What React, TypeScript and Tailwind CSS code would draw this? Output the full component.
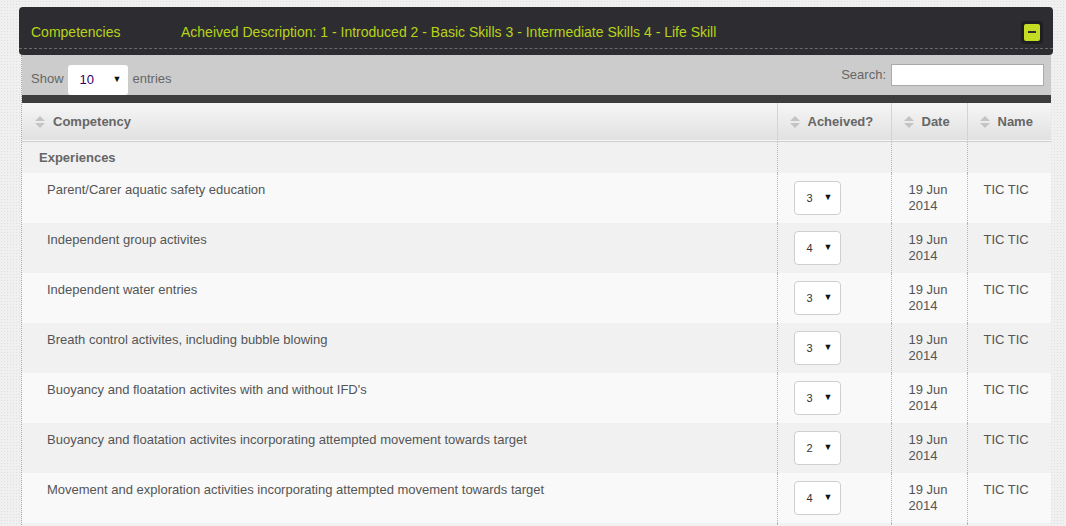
import React from "react";

const rows = [
  { name: "Parent/Carer aquatic safety education", level: "3" },
  { name: "Independent group activites", level: "4" },
  { name: "Independent water entries", level: "3" },
  { name: "Breath control activites, including bubble blowing", level: "3" },
  { name: "Buoyancy and floatation activites with and without IFD's", level: "3" },
  { name: "Buoyancy and floatation activites incorporating attempted movement towards target", level: "2" },
  { name: "Movement and exploration activities incorporating attempted movement towards target", level: "4" },
];

function SortIcon() {
  return (
    <svg width="12" height="14" viewBox="0 0 12 14" className="shrink-0">
      <path d="M6 1 L11 6 L1 6 Z" fill="#c4c4c4" />
      <path d="M1 8 L11 8 L6 13 Z" fill="#c4c4c4" />
    </svg>
  );
}

function MiniSelect({ value }: { value: string }) {
  return (
    <div className="flex h-[34px] w-[47px] items-center justify-between rounded-[4px] border border-[#cfcfcf] bg-white pl-[12px] pr-[7px] text-[11px] text-[#333]">
      <span>{value}</span>
      <span className="text-[9px] text-[#111]">▼</span>
    </div>
  );
}

export default function App() {
  return (
    <div
      className="min-h-[526px] bg-[#f0f0f0] bg-[radial-gradient(#e0e0e0_1px,transparent_1px)] bg-[length:3px_3px] pt-[7px] pl-[19px]"
      style={{ fontFamily: '"Liberation Sans", Arial, sans-serif' }}
    >
      <div className="w-[1034px]">
        {/* panel header */}
        <div className="rounded-[4px] bg-[#2d2d31]">
          <div className="flex h-[42px] items-center border-b border-dashed border-[#6a6a6a] pt-[9px] pl-[12px] pr-[10px] text-[14px] text-[#b8d319]">
            <span className="w-[150px]">Competencies</span>
            <span>Acheived Description: 1 - Introduced 2 - Basic Skills 3 - Intermediate Skills 4 - Life Skill</span>
            <div className="ml-auto flex h-[23px] w-[22px] items-center justify-center rounded-[4px] bg-[#1f1f22]">
              <div className="flex h-[17px] w-[16px] items-center justify-center rounded-[2px] bg-[#c5dc24]">
                <div className="h-[2px] w-[8px] bg-[#2d2d31]" />
              </div>
            </div>
          </div>
          <div className="h-[6px]" />
        </div>

        <div className="mx-[2px] border-l border-dotted border-[#aaa]">
          {/* toolbar */}
          <div className="flex h-[40px] items-start justify-between bg-[#cccccc] pl-[9px] pr-[7px] text-[13px] text-[#666]">
            <div className="mt-[10px] flex items-start">
              <span className="mt-[4px]">Show</span>
              <div className="ml-[4px] flex h-[30px] w-[60px] items-center justify-between rounded-[3px] bg-white pl-[12px] pr-[6px] text-[13px] text-[#330066]">
                <span>10</span>
                <span className="text-[9px] text-[#111]">▼</span>
              </div>
              <span className="ml-[5px] mt-[4px]">entries</span>
            </div>
            <div className="mt-[9px] flex items-center">
              <span className="mr-[5px]">Search:</span>
              <div className="h-[22px] w-[153px] border border-[#aaa] bg-white" />
            </div>
          </div>
          <div className="h-[8px] bg-[#3d3d3d]" />

          <table className="w-[1029px] table-fixed border-collapse text-left">
            <colgroup>
              <col className="w-[755px]" />
              <col className="w-[114px]" />
              <col className="w-[76px]" />
              <col className="w-[84px]" />
            </colgroup>
            <thead>
              <tr className="h-[38px] border-b border-[#cfcfcf] bg-gradient-to-b from-[#f6f6f6] to-[#e1e1e1] text-[13px] font-bold text-[#666]">
                <th className="pl-[12px] font-bold">
                  <div className="flex items-center gap-[7px]"><SortIcon />Competency</div>
                </th>
                <th className="border-l border-[#d4d4d4] pl-[11px] font-bold">
                  <div className="flex items-center gap-[7px]"><SortIcon />Acheived?</div>
                </th>
                <th className="border-l border-[#d4d4d4] pl-[11px] font-bold">
                  <div className="flex items-center gap-[7px]"><SortIcon />Date</div>
                </th>
                <th className="border-l border-[#d4d4d4] pl-[11px] font-bold">
                  <div className="flex items-center gap-[7px]"><SortIcon />Name</div>
                </th>
              </tr>
            </thead>
            <tbody className="text-[13px] text-[#555]">
              <tr className="h-[32px] bg-[#f1f1f1]">
                <td className="pl-[17px] text-[13px] font-bold text-[#666]">Experiences</td>
                <td className="border-l border-dotted border-[#b5b5b5]" />
                <td className="border-l border-dotted border-[#b5b5b5]" />
                <td className="border-l border-dotted border-[#b5b5b5]" />
              </tr>
              {rows.map((r, i) => (
                <tr key={i} className={i % 2 === 0 ? "h-[50px] bg-[#f9f9f9]" : "h-[50px] bg-[#f1f1f1]"}>
                  <td className="pl-[25px] pt-[9px] align-top leading-[16px]">{r.name}</td>
                  <td className="border-l border-dotted border-[#b5b5b5] pl-[16px] pt-[8px] align-top">
                    <MiniSelect value={r.level} />
                  </td>
                  <td className="border-l border-dotted border-[#b5b5b5] pl-[17px] pt-[9px] align-top leading-[16px]">
                    19 Jun<br />2014
                  </td>
                  <td className="border-l border-dotted border-[#b5b5b5] pl-[16px] pt-[9px] align-top leading-[16px]">TIC TIC</td>
                </tr>
              ))}
              <tr className="h-[6px] bg-[#f1f1f1]">
                <td />
                <td className="border-l border-dotted border-[#b5b5b5]" />
                <td className="border-l border-dotted border-[#b5b5b5]" />
                <td className="border-l border-dotted border-[#b5b5b5]" />
              </tr>
            </tbody>
          </table>
        </div>
      </div>
    </div>
  );
}
